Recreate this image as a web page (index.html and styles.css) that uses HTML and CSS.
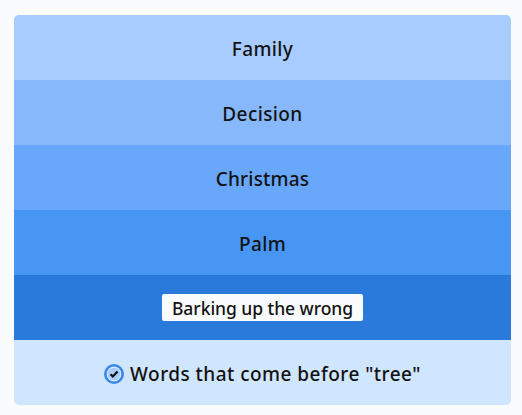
FILE: index.html
```
<!DOCTYPE html>
<html lang="en">
<head>
<meta charset="utf-8">
<title>Words</title>
<link rel="stylesheet" href="styles.css">
</head>
<body>
<main class="board">
  <div class="row row-1"><span class="w-family">Family</span></div>
  <div class="row row-2"><span class="w-decision">Decision</span></div>
  <div class="row row-3"><span class="w-christmas">Christmas</span></div>
  <div class="row row-4"><span class="w-palm">Palm</span></div>
  <div class="row row-5"><span class="clue">Barking up the wrong</span></div>
  <div class="row answer">
    <svg class="check" viewBox="0 0 20 20" aria-hidden="true">
      <circle cx="10" cy="10" r="10" fill="#3788e8"/>
      <circle cx="10" cy="10" r="7.4" fill="#dcecff"/>
      <circle cx="10" cy="10" r="6.3" fill="#a8ccff"/>
      <path d="M6.5 10.2 8.8 12.5 13.6 7.4" fill="none" stroke="#111" stroke-width="2.2"/>
    </svg>
    <span class="w-answer">Words that come before "tree"</span>
  </div>
</main>
</body>
</html>
```
FILE: styles.css
```
body {
  margin: 0;
  padding: 15px 11px 10px 14px;
  background: #f9fbfd;
  color: #121212;
  font-family: "Noto Sans", "Open Sans", sans-serif;
  font-size: 19px;
  font-weight: 550;
  letter-spacing: 0.4px;
}
.board {
  border-radius: 5px;
  overflow: hidden;
}
.row {
  display: flex;
  align-items: center;
  justify-content: center;
  height: 65px;
  padding-top: 3px;
  box-sizing: border-box;
  white-space: nowrap;
}
.row-1 { background: #a8ccff; }
.row-2 { background: #86b8fb; }
.row-3 { background: #68a7f9; }
.row-4 { background: #4896f4; }
.row-5 { background: #2a7adb; padding-top: 0; }
.w-christmas { letter-spacing: 0.2px; }
.w-answer { letter-spacing: 0.47px; }
.clue {
  display: flex;
  align-items: center;
  justify-content: center;
  box-sizing: border-box;
  width: 201px;
  height: 27px;
  padding-top: 1px;
  border-radius: 2px;
  background: #f9fbfd;
  font-size: 17.5px;
  font-weight: 500;
  letter-spacing: -0.05px;
}
.answer {
  background: #d0e6ff;
  gap: 6px;
}
.check {
  width: 20px;
  height: 20px;
}
```
